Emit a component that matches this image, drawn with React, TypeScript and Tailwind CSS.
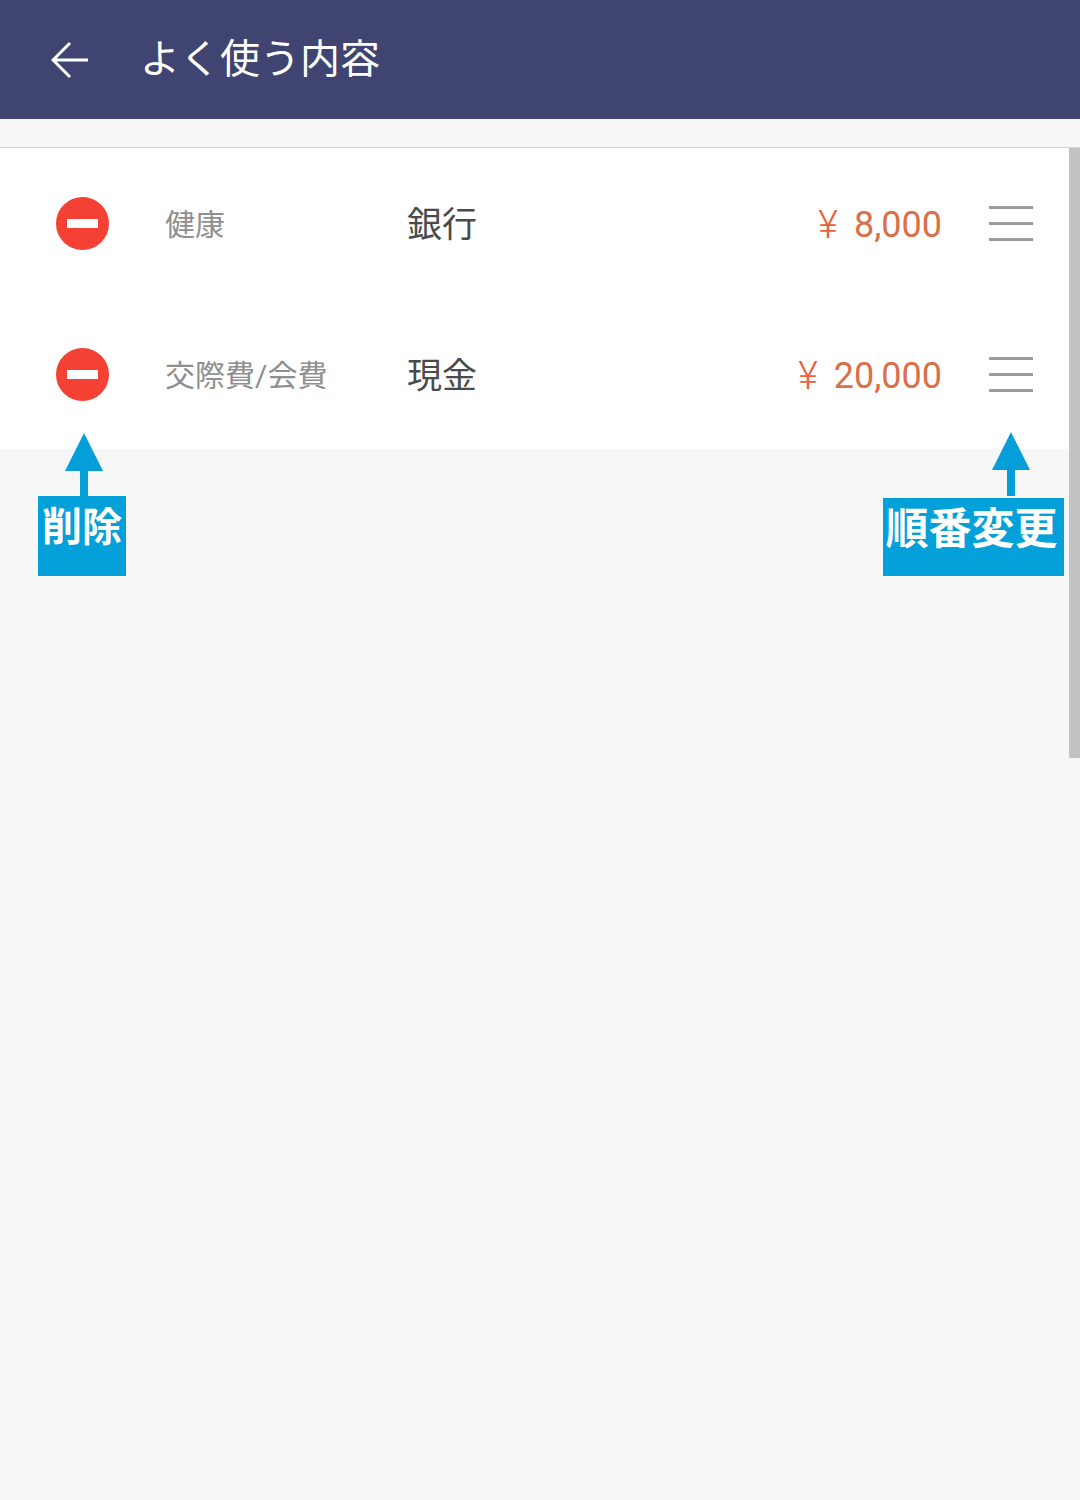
const jpFont = "font-['Roboto','Noto_Sans_CJK_JP',sans-serif]"

const rows = [
  { category: '健康', account: '銀行', amount: '8,000' },
  { category: '交際費/会費', account: '現金', amount: '20,000' },
]

function MinusBadge() {
  return (
    <div className="flex h-[53px] w-[53px] items-center justify-center rounded-full bg-[#f44133]">
      <div className="h-[9px] w-[31px] bg-white" />
    </div>
  )
}

function DragHandle() {
  return (
    <div className="flex w-[44px] flex-col gap-[13px]">
      <div className="h-[3px] bg-[#9b9b9b]" />
      <div className="h-[3px] bg-[#9b9b9b]" />
      <div className="h-[3px] bg-[#9b9b9b]" />
    </div>
  )
}

function Callout({ label, className, arrowClassName, boxClassName }: { label: string; className: string; arrowClassName: string; boxClassName: string }) {
  return (
    <div className={`absolute flex flex-col ${className}`}>
      <svg className={arrowClassName} width="38" height="64" viewBox="0 0 38 64">
        <path d="M19 0 L38 38 L23 38 L23 64 L15 64 L15 38 L0 38 Z" fill="#049fd8" />
      </svg>
      <div className={`flex items-start justify-center bg-[#04a0d9] font-bold text-white ${boxClassName}`}>{label}</div>
    </div>
  )
}

export default function App() {
  return (
    <div className={`relative h-[1500px] w-[1080px] overflow-hidden bg-[#f7f7f7] ${jpFont}`}>
      <header className="flex h-[119px] items-center bg-[#3f4470] pl-[51px]">
        <svg width="38" height="38" viewBox="0 0 38 38" fill="none" stroke="white" strokeWidth="3">
          <path d="M37 19 L2 19 M19 2 L2 19 L19 36" />
        </svg>
        <h1 className="ml-[51px] mt-[1px] text-[40px] leading-none text-white">よく使う内容</h1>
      </header>

      <div className="mt-[28px] border-t border-[#d4d4d4]">
        <div className="relative h-[301px] overflow-hidden bg-white">
          {rows.map((row) => (
            <div key={row.account} className="flex h-[151px] items-center pl-[56px]">
              <MinusBadge />
              <div className="ml-[56px] mt-[3px] w-[242px] text-[30px] leading-none text-[#8f8f8f]">{row.category}</div>
              <div className="mt-[3px] text-[35px] leading-none text-[#4a4a4a]">{row.account}</div>
              <div className="ml-auto mr-[47px] mt-[3px] flex items-center text-[36px] leading-none text-[#d9704a]">
                <span className="mr-[16px] text-[38px] font-light text-[#e8613a]">¥</span>
                {row.amount}
              </div>
              <div className="mr-[47px]">
                <DragHandle />
              </div>
            </div>
          ))}
        </div>
      </div>

      {/* scrollbar */}
      <div className="absolute top-[148px] right-0 h-[610px] w-[11px] bg-[#c2c2c2]" />

      {/* annotations */}
      <Callout
        label="削除"
        className="top-[433px] left-[38px] items-start"
        arrowClassName="ml-[27px]"
        boxClassName="-mt-[1px] h-[80px] w-[88px] pt-[12px] text-[40px] leading-none"
      />
      <Callout
        label="順番変更"
        className="top-[432px] left-[883px] items-start"
        arrowClassName="ml-[109px]"
        boxClassName="mt-[2px] h-[78px] w-[181px] pt-[10px] pr-[4px] text-[43px] leading-none"
      />
    </div>
  )
}
